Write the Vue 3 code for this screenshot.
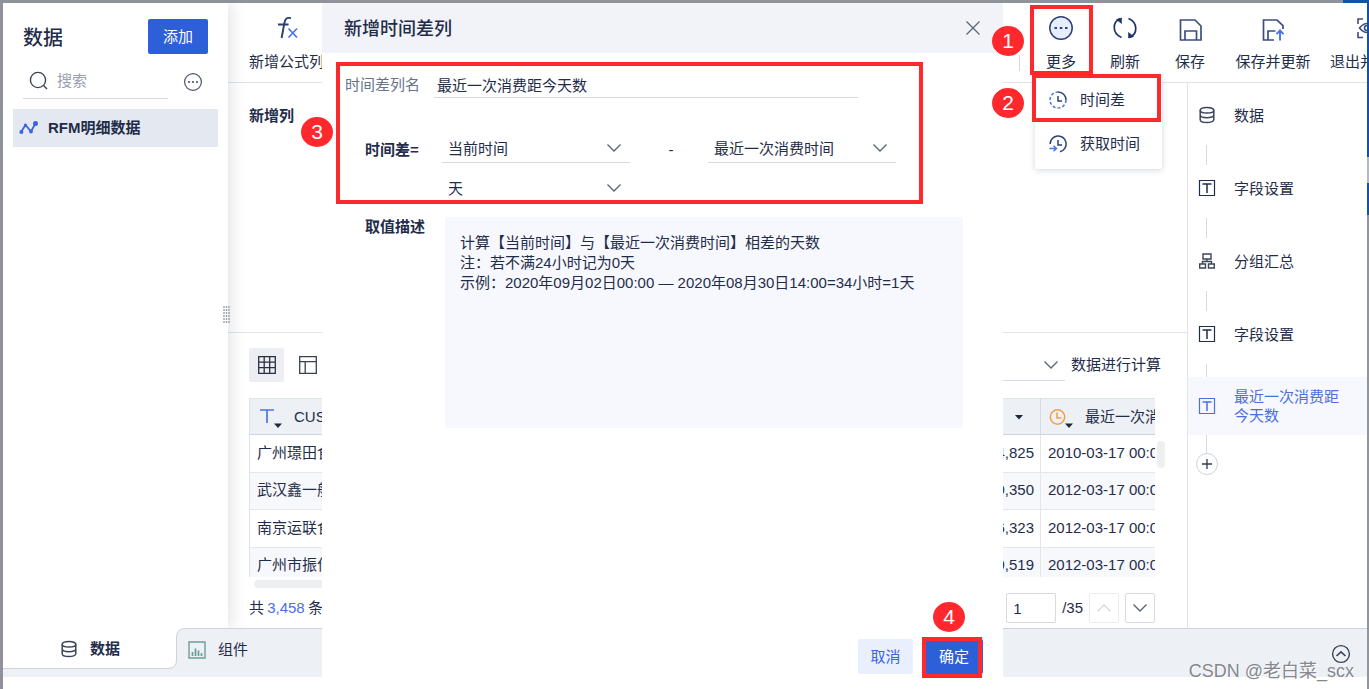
<script setup>
import { ref } from 'vue'

const keyword = ref('')
const columnName = ref('最近一次消费距今天数')
const page = ref('1')

const rows = [
  { name: '广州璟田食', amount: '4,825', date: '2010-03-17 00:00' },
  { name: '武汉鑫一般', amount: '9,350', date: '2012-03-17 00:00' },
  { name: '南京运联食', amount: '6,323', date: '2012-03-17 00:00' },
  { name: '广州市振作', amount: '9,519', date: '2012-03-17 00:00' },
]

const steps = [
  { icon: 'db', label: '数据' },
  { icon: 'field', label: '字段设置' },
  { icon: 'group', label: '分组汇总' },
  { icon: 'field', label: '字段设置' },
  { icon: 'field', label: '最近一次消费距今天数', active: true },
]
</script>

<template>
  <div class="page">
    <div class="app">
      <div class="workspace">
        <aside class="sidebar">
          <div class="side-head">
            <h1>数据</h1>
            <button class="primary" type="button">添加</button>
          </div>
          <div class="side-search">
            <label class="search-box">
              <svg width="20" height="20" viewBox="0 0 20 20" fill="none" stroke="#3a4658" stroke-width="1.4"><circle cx="9" cy="9" r="7.6" /><path d="M14.5 14.5 18 18" /></svg>
              <input v-model="keyword" type="text" placeholder="搜索" aria-label="搜索" />
            </label>
            <button class="bare" type="button" aria-label="更多操作">
              <svg width="20" height="20" viewBox="0 0 20 20" fill="none" stroke="#4a5568" stroke-width="1.2"><circle cx="10" cy="10" r="8.4" /><g fill="#4a5568" stroke="none"><circle cx="6" cy="10" r="1.1" /><circle cx="10" cy="10" r="1.1" /><circle cx="14" cy="10" r="1.1" /></g></svg>
            </button>
          </div>
          <a class="side-item" href="#">
            <svg width="20" height="16" viewBox="0 0 20 16" fill="none" stroke="#3c63e0" stroke-width="1.8"><path d="M2 12 6.5 5 12 11.5 16.5 3.5" /><g fill="#3c63e0" stroke="none"><circle cx="2.4" cy="12" r="2" /><circle cx="6.5" cy="5" r="1.5" /><circle cx="12" cy="11.5" r="1.9" /><circle cx="16.5" cy="3.4" r="2.5" /></g></svg>
            <span>RFM明细数据</span>
          </a>
          <svg class="grip" width="7" height="17" viewBox="0 0 7 17" stroke="#9aa1ac" stroke-dasharray="2 1"><path d="M1 0V17M3.5 0V17M6 0V17" stroke-width="1.4" /></svg>
        </aside>

        <div class="right-side">
          <header class="toolbar">
            <button class="tool formula" type="button">
              <svg width="26" height="26" viewBox="0 0 26 26" fill="none" stroke="#2c3f6d" stroke-width="1.9"><path d="M17 3.2C12.5 2 11.2 4 10.4 8L7.6 23M4 9.500H14.500" /><path d="m14.500 13.500 8.500 9M23 13.500l-8.500 9" stroke="#4a74e8" stroke-width="1.700" /></svg>
              <span>新增公式列</span>
            </button>
            <div class="tools">
              <i class="tool-split"></i>
              <button class="tool w64" type="button">
                <svg width="26" height="26" viewBox="0 0 26 26" fill="none" stroke="#2c4073" stroke-width="1.5"><circle cx="13" cy="13" r="11.200" fill="#e6edfc" /><path d="M6.500 13h2.500M11.800 13h2.500M17 13h2.500" stroke-width="2.200" /></svg>
                <span>更多</span>
              </button>
              <button class="tool w64" type="button">
                <svg width="26" height="26" viewBox="0 0 26 26" fill="none" stroke="#1d3266" stroke-width="1.700"><path d="M9.500 22.500C0 18.500 0 7 8.500 3.500M16.500 3.500C26 7.500 26 19 17.500 22.500" /><path d="M4.500 4.500 9.500 3V8.500ZM16.500 17.500V23L21.500 21.500Z" fill="#1d3266" stroke-width=".6" /></svg>
                <span>刷新</span>
              </button>
              <button class="tool w66" type="button">
                <svg width="26" height="26" viewBox="0 0 26 26" fill="none" stroke="#3c4f80" stroke-width="1.700"><path d="M3.500 5H18L24 11V25H3.500ZM8 25V16H19.500V25" /></svg>
                <span>保存</span>
              </button>
              <button class="tool w100" type="button">
                <svg width="26" height="26" viewBox="0 0 26 26" fill="none" stroke="#3c4f80" stroke-width="1.700"><path d="M14 25H3.500V5H17L23 10.500V14M8 25V16H15.500" /><path d="M20 25.500V16M16.500 19.200 20 15.500 23.500 19.200" stroke="#4774ea" stroke-width="1.900" /></svg>
                <span>保存并更新</span>
              </button>
              <button class="tool exit" type="button">
                <svg width="26" height="26" viewBox="0 0 26 26" fill="none" stroke="#3c4f80" stroke-width="1.600"><path d="M9 4H4V9M4 17V22.500H9M17 4H22V9M22 17V22.500H17" /><path d="M5.500 13Q13 4 20.500 13 13 22 5.500 13Z" /><circle cx="13" cy="13" r="2.500" /></svg>
                <span>退出并</span>
              </button>
            </div>
          </header>

          <div class="content">
            <main class="center">
              <section class="config"><h2>新增列</h2></section>
              <section class="preview">
                <div class="view-bar">
                  <button class="view on" type="button" aria-label="表格视图">
                    <svg width="18" height="18" viewBox="0 0 18 18" fill="none" stroke="#2a3040" stroke-width="1.300"><path d="M.7.7H17.300V17.300H.7ZM.7 6.200H17.300M.7 11.700H17.300M6.200.7V17.300M11.700.7V17.300" /></svg>
                  </button>
                  <button class="view" type="button" aria-label="结构视图">
                    <svg width="18" height="18" viewBox="0 0 18 18" fill="none" stroke="#3a4150" stroke-width="1.300"><path d="M.7.7H17.300V17.300H.7ZM.7 5.700H17.300M6.200 5.700V17.300" /></svg>
                  </button>
                  <div class="calc">
                    <button class="calc-select" type="button" aria-label="计算范围">
                      <svg width="16" height="10" viewBox="0 0 16 10" fill="none" stroke="#5a6474" stroke-width="1.300"><path d="m1.500 1.500 6.500 6.500 6.500-6.500" /></svg>
                    </button>
                    <span>数据进行计算</span>
                  </div>
                </div>
                <div class="table-area">
                  <div class="table-clip">
                    <table>
                      <colgroup><col /><col class="c-amount" /><col class="c-date" /></colgroup>
                      <thead>
                        <tr>
                          <th>
                            <div class="th">
                              <svg width="26" height="22" viewBox="0 0 26 22"><path d="M3 4H17M10 4V17" fill="none" stroke="#4a74e8" stroke-width="1.700" /><path d="M17 17.500h8l-4 4.500z" fill="#1d2940" /></svg>
                              <span>CUS</span>
                            </div>
                          </th>
                          <th><div class="th end"><svg width="10" height="6" viewBox="0 0 10 6"><path d="M1 1h8L5 5.500z" fill="#1d2940" /></svg></div></th>
                          <th>
                            <div class="th">
                              <svg width="26" height="22" viewBox="0 0 26 22"><g fill="none" stroke="#f0a04a" stroke-width="1.500"><circle cx="9.500" cy="11" r="7.200" /><path d="M9 6.500V12H13.500" /></g><path d="M17 17.500h8l-4 4.500z" fill="#1d2940" /></svg>
                              <span>最近一次消费</span>
                            </div>
                          </th>
                        </tr>
                      </thead>
                      <tbody>
                        <tr v-for="row in rows" :key="row.name">
                          <td>{{ row.name }}</td>
                          <td class="num">{{ row.amount }}</td>
                          <td>{{ row.date }}</td>
                        </tr>
                      </tbody>
                    </table>
                  </div>
                  <i class="v-scroll"></i>
                </div>
                <i class="h-scroll"></i>
                <div class="pager">
                  <p>共 <b>3,458</b> 条</p>
                  <div class="pager-nav">
                    <input v-model="page" type="text" aria-label="页码" />
                    <span>/35</span>
                    <button class="step off" type="button" aria-label="上一页"><svg width="16" height="10" viewBox="0 0 16 10" fill="none" stroke="#d3d7df" stroke-width="1.400"><path d="m1.500 8.500 6.500-6.500 6.500 6.500" /></svg></button>
                    <button class="step" type="button" aria-label="下一页"><svg width="16" height="10" viewBox="0 0 16 10" fill="none" stroke="#5a6474" stroke-width="1.400"><path d="m1.500 1.500 6.500 6.500 6.500-6.500" /></svg></button>
                  </div>
                </div>
              </section>
            </main>

            <nav class="flow">
              <ol>
                <li v-for="(step, i) in steps" :key="i" :class="{ active: step.active, before: i === 3 }">
                  <a href="#">
                    <svg v-if="step.icon === 'db'" width="18" height="18" viewBox="0 0 18 18" fill="none" stroke="#3a4658" stroke-width="1.500"><ellipse cx="9" cy="4.200" rx="6.800" ry="2.800" /><path d="M2.200 4.200V13.800C2.200 17.500 15.800 17.500 15.800 13.800V4.200M2.200 9C2.200 12.500 15.800 12.500 15.800 9" /></svg>
                    <svg v-else-if="step.icon === 'group'" width="18" height="18" viewBox="0 0 18 18" fill="none" stroke="#3a4658" stroke-width="1.400"><path d="M5 2H13V7H5ZM9 7V9.500M4.500 12V9.500H13.500V12M1.700 12H7.500V16H1.700ZM10.500 12H16.300V16H10.500Z" /></svg>
                    <svg v-else width="18" height="18" viewBox="0 0 18 18" fill="none" stroke="currentColor" stroke-width="1.200"><path d="M1.500 1.500H16.500V16.500H1.500Z" /><path d="M4.500 5H13.500M9 5V14" stroke-width="1.500" /></svg>
                    <span>{{ step.label }}</span>
                  </a>
                  <i class="link"></i>
                </li>
              </ol>
              <button class="add-step" type="button" aria-label="添加步骤">
                <svg width="10" height="10" viewBox="0 0 10 10" stroke="#2f3b4d" stroke-width="1.300"><path d="M0 5H10M5 0V10" /></svg>
              </button>
            </nav>
          </div>
        </div>
      </div>

      <footer class="tabs">
        <button class="tab current" type="button">
          <svg width="18" height="18" viewBox="0 0 18 18" fill="none" stroke="#3a4658" stroke-width="1.500"><ellipse cx="9" cy="4.200" rx="6.800" ry="2.800" /><path d="M2.200 4.200V13.800C2.200 17.500 15.800 17.500 15.800 13.800V4.200M2.200 9C2.200 12.500 15.800 12.500 15.800 9" /></svg>
          <span>数据</span>
        </button>
        <svg class="bend" width="18" height="42" viewBox="0 0 18 42"><path d="M0 0H18C11 .5 8.500 3 8.500 9V32Q8.500 40.500 0 40.500Z" fill="#fff" /><path d="M0 40.500Q8.500 40.500 8.500 32V9Q8.500 .5 18 .5" fill="none" stroke="#cdd3dd" /></svg>
        <div class="tab-rest">
          <button class="tab" type="button">
            <svg width="18" height="18" viewBox="0 0 18 18" fill="none" stroke="#6b9d98" stroke-width="1.400"><path d="M1 1H17V17H1Z" /><path d="M4.500 15V11M7.500 15V7.500M10.500 15V9.500M13.500 15V12" stroke-width="1.700" /></svg>
            <span>组件</span>
          </button>
          <button class="bare collapse" type="button" aria-label="展开">
            <svg width="20" height="20" viewBox="0 0 20 20" fill="none" stroke="#3a4658" stroke-width="1.400"><circle cx="10" cy="10" r="8.400" /><path d="m5.500 12 4.500-4.200 4.500 4.200" stroke-width="1.700" /></svg>
          </button>
        </div>
      </footer>
    </div>

    <ul class="menu">
      <li>
        <button type="button">
          <svg width="20" height="20" viewBox="0 0 20 20" fill="none" stroke="#4a74e8" stroke-width="1.500"><path d="M10 2A8 8 0 0 1 18 10" stroke="#2c4073" /><path d="M18 10A8 8 0 1 1 10 2" stroke-dasharray="3 2" /><path d="M10 6V11H14" stroke="#2c4073" /></svg>
          <span>时间差</span>
        </button>
      </li>
      <li>
        <button type="button">
          <svg width="20" height="20" viewBox="0 0 20 20" fill="none" stroke="#2c4073" stroke-width="1.500"><path d="M2.200 10A8 8 0 1 1 12 17.700M10 6V11H14" /><path d="M1.500 14.500H8M5.500 11.800 8.500 14.500 5.500 17.200" stroke="#4a74e8" /></svg>
          <span>获取时间</span>
        </button>
      </li>
    </ul>

    <div class="dialog" role="dialog" aria-labelledby="dialog-title">
      <div class="dialog-head">
        <h2 id="dialog-title">新增时间差列</h2>
        <button class="bare" type="button" aria-label="关闭">
          <svg width="16" height="16" viewBox="0 0 16 16" stroke="#5a6474" stroke-width="1.300"><path d="m1.500 1.500 13 13M14.500 1.500l-13 13" /></svg>
        </button>
      </div>
      <form class="dialog-body" @submit.prevent>
        <div class="name-row">
          <label for="col-name">时间差列名</label>
          <input id="col-name" v-model="columnName" type="text" />
        </div>
        <div class="diff-row">
          <label for="from-time">时间差=</label>
          <div class="picker">
            <select id="from-time"><option>当前时间</option></select>
            <svg width="16" height="10" viewBox="0 0 16 10" fill="none" stroke="#5a6474" stroke-width="1.300"><path d="m1.500 1.500 6.500 6.500 6.500-6.500" /></svg>
          </div>
          <span class="minus">-</span>
          <div class="picker">
            <select aria-label="减去的时间"><option>最近一次消费时间</option></select>
            <svg width="16" height="10" viewBox="0 0 16 10" fill="none" stroke="#5a6474" stroke-width="1.300"><path d="m1.500 1.500 6.500 6.500 6.500-6.500" /></svg>
          </div>
        </div>
        <div class="unit-row">
          <div class="picker plain">
            <select aria-label="单位"><option>天</option></select>
            <svg width="16" height="10" viewBox="0 0 16 10" fill="none" stroke="#5a6474" stroke-width="1.300"><path d="m1.500 1.500 6.500 6.500 6.500-6.500" /></svg>
          </div>
        </div>
        <div class="desc-row">
          <h3>取值描述</h3>
          <div class="desc">
            <p>计算【当前时间】与【最近一次消费时间】相差的天数</p>
            <p>注：若不满24小时记为0天</p>
            <p>示例：2020年09月02日00:00 — 2020年08月30日14:00=34小时=1天</p>
          </div>
        </div>
      </form>
      <div class="dialog-foot">
        <button class="ghost" type="button">取消</button>
        <button class="primary" type="button">确定</button>
      </div>
      <i class="mark mark-form"></i>
      <i class="mark mark-ok"></i>
      <b class="badge badge-3">3</b>
      <b class="badge badge-4">4</b>
    </div>

    <i class="mark mark-more"></i>
    <i class="mark mark-diff"></i>
    <b class="badge badge-1">1</b>
    <b class="badge badge-2">2</b>
    <span class="watermark">CSDN @老白菜_scx</span>
  </div>
</template>

<style>
body {
  margin: 0;
}
</style>

<style scoped>
.page,
.page * {
  box-sizing: border-box;
}
.page {
  position: relative;
  min-height: 100vh;
  padding: 3px 2px 0 3px;
  overflow: hidden;
  color: #1f2d4a;
  font: 15px/20px "Liberation Sans", "Noto Sans CJK SC", sans-serif;
  background:
    linear-gradient(#1055a3, #1055a3) right top / 26px 3px no-repeat,
    linear-gradient(#1055a3 157px, #b4b8bf 157px, #b4b8bf 183px, #1055a3 183px, #1055a3 215px, #92959c 215px) right top / 2px 100% no-repeat,
    #8f9299;
}
button,
input,
select {
  font: inherit;
  color: inherit;
  margin: 0;
  padding: 0;
  border: 0;
  border-radius: 0;
  background: none;
  outline: 0;
}
h1,
h2,
h3,
p,
ol,
ul {
  margin: 0;
  padding: 0;
  list-style: none;
}
a {
  color: inherit;
  text-decoration: none;
}
svg {
  display: block;
  flex: none;
}
.bare {
  display: flex;
}
.primary,
.ghost {
  height: 35px;
  border-radius: 2px;
  background: #2d5fd9;
  color: #fff;
}
.ghost {
  background: #e9effc;
  color: #3a66dc;
}

.app {
  display: flex;
  flex-direction: column;
  min-height: calc(100vh - 3px);
  padding-bottom: 12px;
  background: #fff;
}
.workspace {
  display: flex;
  flex: 1;
}
.sidebar {
  position: relative;
  z-index: 1;
  width: 225px;
  flex: none;
  padding: 16px 10px 0;
  box-shadow: 4px 0 14px rgba(40, 50, 70, 0.12);
  clip-path: inset(0 -20px 0 0);
}
.side-head {
  display: flex;
  align-items: center;
  justify-content: space-between;
  padding: 0 10px;
}
.side-head h1 {
  padding-top: 3px;
  font-size: 20px;
  line-height: 28px;
  font-weight: 500;
}
.side-head .primary {
  width: 60px;
}
.side-search {
  display: flex;
  align-items: center;
  gap: 15px;
  height: 45px;
  margin-bottom: 10px;
  padding: 0 15px 0 10px;
}
.search-box {
  display: flex;
  align-items: center;
  gap: 8px;
  flex: 1;
  height: 100%;
  padding: 9px 0 0 6px;
  border-bottom: 1px solid #d5dae3;
}
.search-box input {
  width: 80px;
}
.search-box input::placeholder {
  color: #9aa2ae;
  opacity: 1;
}
.side-search .bare {
  padding-top: 10px;
}
.side-item {
  display: flex;
  align-items: center;
  gap: 9px;
  height: 38px;
  padding-left: 6px;
  background: #e4e8f0;
}
.side-item span {
  font-weight: 600;
}
.grip {
  position: absolute;
  right: -2px;
  top: 303px;
}

.right-side {
  display: flex;
  flex-direction: column;
  flex: 1;
  min-width: 0;
}
.toolbar {
  display: flex;
  justify-content: space-between;
  height: 80px;
  border-bottom: 1px solid #dfe3ea;
  overflow: hidden;
}
.tool {
  display: flex;
  flex-direction: column;
  align-items: center;
  gap: 11px;
  padding-top: 12px;
  white-space: nowrap;
}
.formula {
  padding-left: 21px;
}
.tools {
  display: flex;
}
.tool-split {
  width: 1px;
  height: 16px;
  margin: 52px 9px 0 0;
  background: #d5dae3;
}
.w64 {
  width: 64px;
}
.w66 {
  width: 66px;
}
.w100 {
  width: 100px;
}
.exit {
  width: 44px;
  padding-left: 7px;
  align-items: flex-start;
  overflow: hidden;
}
.exit svg {
  margin-left: 24px;
}
.content {
  display: flex;
  flex: 1;
}
.center {
  display: flex;
  flex-direction: column;
  flex: 1;
  min-width: 0;
}
.config {
  flex: 1;
  padding: 23px 21px;
  border-bottom: 1px solid #dfe3ea;
}
.config h2 {
  font-size: 15px;
  line-height: 20px;
  font-weight: 600;
}
.preview {
  padding: 15px 32px 5px 21px;
}
.view-bar {
  display: flex;
  align-items: center;
  gap: 6px;
  height: 34px;
  margin-bottom: 16px;
}
.view {
  display: grid;
  place-items: center;
  width: 35px;
  height: 34px;
  border-radius: 2px;
}
.view.on {
  background: #eceef3;
}
.calc {
  display: flex;
  align-items: center;
  gap: 6px;
  margin: 0 -6px 0 auto;
}
.calc-select {
  display: flex;
  align-items: center;
  justify-content: flex-end;
  width: 120px;
  height: 31px;
  padding-right: 6px;
  border-bottom: 1px solid #d5dae3;
}
.table-area {
  position: relative;
}
.table-clip {
  height: 179px;
  overflow: hidden;
}
table {
  width: 100%;
  table-layout: fixed;
  border-collapse: separate;
  border-spacing: 0;
  border-left: 1px solid #dfe3ea;
}
.c-amount {
  width: 160px;
}
.c-date {
  width: 114px;
}
th {
  height: 37px;
  padding: 0 7px;
  background: #edf0f5;
  border-top: 1px solid #dfe3ea;
  border-right: 1px solid #d5dae3;
  border-bottom: 1px solid #cdd3dd;
  font-weight: 400;
}
th .th {
  display: flex;
  align-items: center;
  gap: 11px;
  white-space: nowrap;
}
th .end {
  justify-content: flex-end;
  padding-right: 9px;
}
td {
  height: 38px;
  padding: 0 6px 2px 7px;
  border-right: 1px solid #e3e6ed;
  border-bottom: 1px solid #e3e6ed;
  white-space: nowrap;
}
tbody tr:nth-child(even) td {
  height: 37px;
  background: #f7f8fc;
}
th,
td {
  overflow: hidden;
}
th:last-child,
td:last-child {
  border-right: 0;
}
.num {
  text-align: right;
}
.v-scroll {
  position: absolute;
  top: 43px;
  right: -10px;
  width: 8px;
  height: 27px;
  border-radius: 4px;
  background: #eeeff1;
}
.h-scroll {
  display: block;
  width: 60%;
  height: 8px;
  margin: 3px 0 5px 5px;
  border-radius: 4px;
  background: #eeeff1;
}
.pager {
  display: flex;
  align-items: center;
  justify-content: space-between;
}
.pager b {
  margin: 0 -1px;
  color: #4a6fe0;
  font-weight: 400;
}
.pager-nav {
  display: flex;
  align-items: center;
  gap: 6px;
}
.pager-nav input {
  width: 50px;
  height: 30px;
  padding: 0 6px;
  border: 1px solid #d5dae3;
  border-radius: 2px;
}
.step {
  display: grid;
  place-items: center;
  width: 30px;
  height: 30px;
  border: 1px solid #d5dae3;
  border-radius: 2px;
}
.step.off {
  border-color: #e8ebf0;
}

.flow {
  width: 180px;
  flex: none;
  padding-top: 9px;
  border-left: 1px solid #dfe3ea;
}
.flow a {
  display: flex;
  align-items: center;
  gap: 18px;
  height: 46px;
  margin-bottom: 7px;
  padding: 0 26px 0 10px;
  line-height: 19px;
}
.link {
  display: block;
  width: 1px;
  height: 20px;
  margin-left: 18px;
  background: #d5dae3;
}
.before .link {
  height: 13px;
}
.flow .active a {
  height: 58px;
  margin-bottom: 0;
  background: #f7f8fd;
  color: #4a6fe0;
}
.active .link {
  height: 18px;
}
.add-step {
  display: grid;
  place-items: center;
  width: 22px;
  height: 22px;
  margin-left: 8px;
  border: 1px solid #cdd3dd;
  border-radius: 50%;
}

.tabs {
  display: flex;
  height: 49px;
  background: #edf0f5;
}
.tab {
  display: flex;
  align-items: center;
  gap: 12px;
  height: 41px;
}
.tab.current {
  width: 165px;
  padding: 2px 0 0 57px;
  background: #fff;
  border-bottom: 1px solid #cdd3dd;
  font-weight: 600;
}
.tab-rest {
  display: flex;
  justify-content: space-between;
  flex: 1;
  padding: 0 16px 0 2px;
  border-top: 1px solid #cdd3dd;
}
.collapse {
  padding-top: 15px;
}

.menu {
  position: absolute;
  top: 76px;
  right: 207px;
  width: 127px;
  padding: 2px 0 3px;
  background: #fff;
  border-radius: 2px;
  box-shadow: 0 1px 6px rgba(40, 50, 70, 0.2);
}
.menu button {
  display: flex;
  align-items: center;
  gap: 12px;
  width: 100%;
  height: 44px;
  padding-left: 13px;
}

.dialog {
  position: absolute;
  top: 3px;
  bottom: 0;
  left: 322px;
  right: 366px;
  z-index: 2;
  display: flex;
  flex-direction: column;
  background: #fff;
}
.dialog-head {
  display: flex;
  align-items: center;
  justify-content: space-between;
  height: 50px;
  padding: 0 22px;
  background: #f2f3f8;
}
.dialog-head h2 {
  padding-top: 2px;
  font-size: 18px;
  line-height: 26px;
  font-weight: 500;
}
.dialog-body {
  flex: 1;
  padding: 19px 40px 0 23px;
}
.name-row {
  display: flex;
  align-items: center;
  gap: 14px;
  height: 26px;
}
.name-row label {
  color: #66738a;
}
.name-row input {
  flex: 1;
  height: 26px;
  max-width: 424px;
  padding: 0 3px 1px;
  border-bottom: 1px solid #d5dae3;
}
.diff-row {
  display: flex;
  align-items: center;
  height: 30px;
  margin-top: 35px;
  padding-left: 20px;
}
.diff-row label {
  width: 77px;
  padding-top: 4px;
  font-weight: 600;
}
.picker {
  position: relative;
  width: 188px;
}
.picker select {
  width: 100%;
  height: 30px;
  padding: 2px 6px 0;
  border-bottom: 1px solid #d5dae3;
  appearance: none;
}
.picker svg {
  position: absolute;
  top: 10px;
  right: 8px;
  pointer-events: none;
}
.plain select {
  border-bottom: 0;
}
.minus {
  width: 78px;
  text-align: center;
  padding: 4px 0 0 4px;
}
.unit-row {
  padding: 10px 0 0 97px;
}
.desc-row {
  display: flex;
  padding: 14px 0 0 20px;
}
.desc-row h3 {
  width: 80px;
  font-size: 15px;
  line-height: 20px;
  font-weight: 600;
}
.desc {
  flex: 1;
  min-height: 211px;
  padding: 16px 15px;
  background: #f7f8fd;
}
.dialog-foot {
  display: flex;
  justify-content: flex-end;
  gap: 12px;
  padding: 0 20px 15px;
}
.dialog-foot .ghost {
  width: 55px;
}
.dialog-foot .primary {
  width: 58px;
}

.mark {
  position: absolute;
  z-index: 3;
  border: 4px solid #ff282c;
  pointer-events: none;
}
.mark-form {
  top: 59px;
  left: 14px;
  width: 587px;
  height: 142px;
}
.mark-ok {
  right: 21px;
  bottom: 11px;
  width: 60px;
  height: 41px;
}
.mark-more {
  top: 5px;
  right: 276px;
  width: 63px;
  height: 70px;
}
.mark-diff {
  top: 74px;
  right: 208px;
  width: 129px;
  height: 48px;
}
.badge {
  position: absolute;
  z-index: 3;
  width: 32px;
  height: 30px;
  border-radius: 50%;
  background: #ff282c;
  color: #fff;
  font-size: 21px;
  line-height: 30px;
  font-weight: 400;
  text-align: center;
}
.badge-1 {
  top: 26px;
  right: 345px;
}
.badge-2 {
  top: 88px;
  right: 345px;
}
.badge-3 {
  top: 114px;
  left: -21px;
}
.badge-4 {
  right: 38px;
  bottom: 57px;
}
.watermark {
  position: absolute;
  right: 15px;
  bottom: 6px;
  z-index: 3;
  color: #85888e;
  font-size: 18px;
  line-height: 24px;
  text-shadow: 1px 1px 0 #fff;
}
</style>
